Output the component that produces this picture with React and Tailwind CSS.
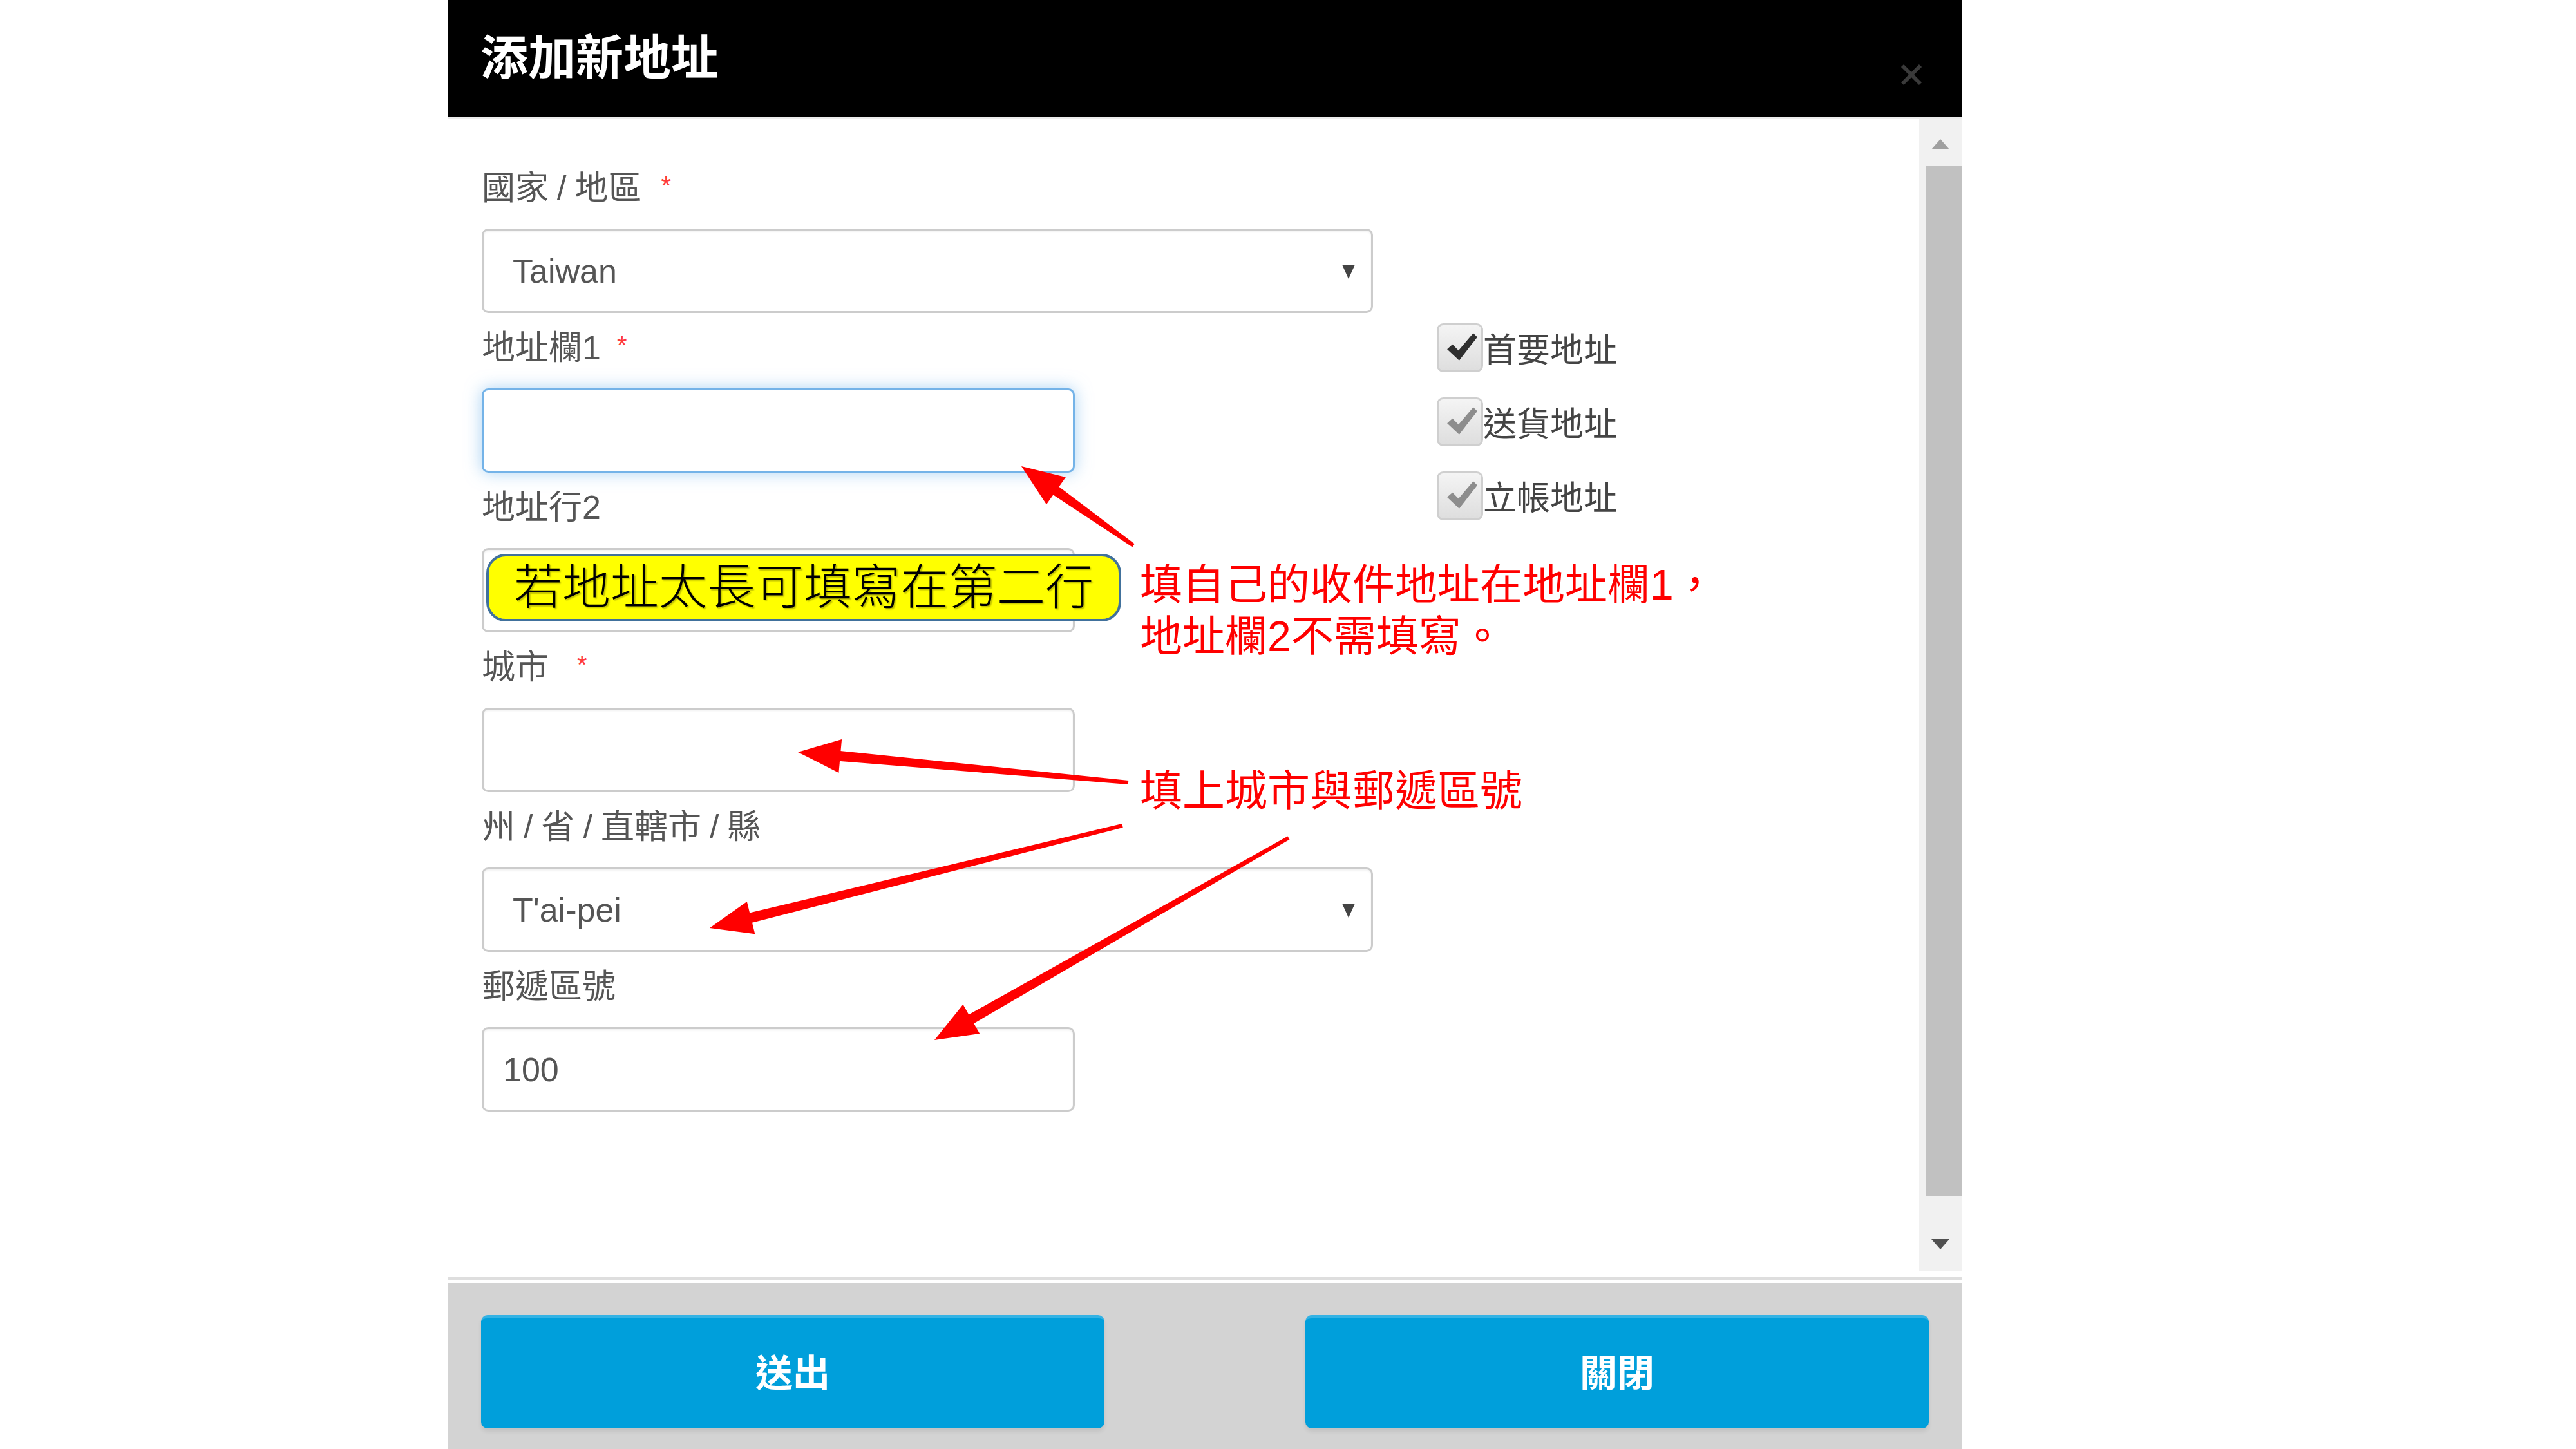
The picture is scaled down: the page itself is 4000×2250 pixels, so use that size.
import React from "react";

function arrowPoints(x1, y1, x2, y2) {
  const dx = x2 - x1;
  const dy = y2 - y1;
  const len = Math.hypot(dx, dy);
  const ux = dx / len;
  const uy = dy / len;
  const nx = -uy;
  const ny = ux;
  const headLen = 66;
  const headW = 26;
  const bx = x2 - ux * headLen;
  const by = y2 - uy * headLen;
  const p = (x, y) => `${x.toFixed(1)},${y.toFixed(1)}`;
  return {
    shaft: [
      p(x1 + nx * 3, y1 + ny * 3),
      p(bx + ux * 8 + nx * 8, by + uy * 8 + ny * 8),
      p(bx + ux * 8 - nx * 8, by + uy * 8 - ny * 8),
      p(x1 - nx * 3, y1 - ny * 3),
    ].join(" "),
    head: [p(x2, y2), p(bx + nx * headW, by + ny * headW), p(bx - nx * headW, by - ny * headW)].join(" "),
  };
}

const arrows = [
  [1760, 847, 1586, 724],
  [1752, 1215, 1239, 1168],
  [1743, 1282, 1102, 1441],
  [2001, 1301, 1451, 1615],
];

// slashes in the labels sit with some air around them
function LabelText({ text }) {
  const parts = text.split("/");
  return (
    <span>
      {parts.map((part, i) => (
        <React.Fragment key={i}>
          {i > 0 && <span className="mx-[13px]">/</span>}
          {part}
        </React.Fragment>
      ))}
    </span>
  );
}

function Label({ text, required, starGap = "ml-[30px]" }) {
  return (
    <div className="h-[117px] pt-[28px] flex items-start text-[52px] leading-none text-[#555]">
      <LabelText text={text} />
      {required && <span className={`${starGap} text-[40px] text-[#ff3b3b] mt-[2px]`}>*</span>}
    </div>
  );
}

function Caret() {
  return (
    <svg className="w-[22px] h-[26px]" viewBox="0 0 22 26">
      <path d="M1 3 H21 L11 25 Z" fill="#444" />
    </svg>
  );
}

function Select({ value }) {
  return (
    <div className="h-[131px] w-[1384px] rounded-[10px] border-[3px] border-[#cccccc] bg-white flex items-center justify-between pl-[45px] pr-[24px] shadow-[inset_0_2px_3px_rgba(0,0,0,0.06)]">
      <span className="text-[52px] text-[#555]">{value}</span>
      <Caret />
    </div>
  );
}

function Input({ value, focused, pad = "pl-[30px]" }) {
  return (
    <div
      className={
        focused
          ? "h-[131px] w-[921px] rounded-[10px] border-[3px] border-[#74b3e8] bg-white shadow-[0_0_26px_rgba(102,175,233,0.55)]"
          : `h-[131px] w-[921px] rounded-[10px] border-[3px] border-[#cccccc] bg-white flex items-center ${pad} shadow-[inset_0_2px_3px_rgba(0,0,0,0.06)]`
      }
    >
      {value && <span className="text-[52px] text-[#555]">{value}</span>}
    </div>
  );
}

function Check({ label, dark }) {
  return (
    <div className="flex items-center h-[76px]">
      <div className="w-[72px] h-[76px] rounded-[10px] border-[3px] border-[#cfcfcf] bg-gradient-to-b from-[#f4f4f4] to-[#dedede] flex items-start justify-center pt-[8px] pl-[6px]">
        <svg className="w-[50px] h-[52px]" viewBox="0 0 24 24">
          <path d="M1 13.5 L5 10 L9.5 14.5 L20.5 1.5 L23.5 4.5 L10 22 Z" fill={dark ? "#2f2f2f" : "#8d8d8d"} />
        </svg>
      </div>
      <span className="text-[52px] leading-none text-[#444] mt-[8px]">{label}</span>
    </div>
  );
}

function Button({ text }) {
  return (
    <button className="w-[968px] h-[176px] rounded-[10px] bg-[#009fdb] border-t-[5px] border-[#33b2e4] text-white text-[58px] font-bold shadow-[0_5px_6px_rgba(0,0,0,0.08)]">
      {text}
    </button>
  );
}

export default function App() {
  return (
    <div className="relative w-[4000px] h-[2250px] bg-white overflow-hidden font-['Liberation_Sans','Noto_Sans_CJK_TC',sans-serif]">
      {/* Modal */}
      <div className="ml-[696px] w-[2350px] h-full flex flex-col">
        <div className="h-[181px] bg-black flex items-center justify-between pl-[50px] pr-[60px]">
          <h1 className="text-[74px] font-bold text-white leading-none">添加新地址</h1>
          <svg className="w-[36px] h-[36px] mt-[50px]" viewBox="0 0 36 36">
            <path d="M4 4 L32 32 M32 4 L4 32" stroke="#3a3a3a" strokeWidth="6" />
          </svg>
        </div>
        <div className="h-[4px] bg-[#ececec]" />

        {/* Body */}
        <div className="h-[1798px] flex">
          <div className="flex-1 pl-[52px] pt-[53px] flex">
            <div className="w-[1384px] flex flex-col">
              <Label text="國家/地區" required />
              <Select value="Taiwan" />
              <Label text="地址欄1" required starGap="ml-[25px]" />
              <Input focused />
              <Label text="地址行2" />
              <Input />
              <Label text="城市" required starGap="ml-[44px]" />
              <Input />
              <Label text="州/省/直轄市/縣" />
              <Select value="T'ai-pei" />
              <Label text="郵遞區號" />
              <Input value="100" />
            </div>
            <div className="ml-[99px] pt-[264px] flex flex-col gap-[39px]">
              <Check label="首要地址" dark />
              <Check label="送貨地址" />
              <Check label="立帳地址" />
            </div>
          </div>
          {/* Scrollbar */}
          <div className="w-[66px] h-[1788px] bg-[#f1f1f1] flex flex-col items-center">
            <div className="h-[72px] pt-[30px]">
              <svg className="w-[30px] h-[18px]" viewBox="0 0 30 18">
                <path d="M15 1 L29 17 H1 Z" fill="#a0a0a0" />
              </svg>
            </div>
            <div className="w-[55px] h-[1600px] bg-[#c1c1c1] ml-[10px]" />
            <div className="pt-[66px]">
              <svg className="w-[30px] h-[18px]" viewBox="0 0 30 18">
                <path d="M1 1 H29 L15 17 Z" fill="#505050" />
              </svg>
            </div>
          </div>
        </div>

        {/* Footer */}
        <div className="h-[5px] bg-[#dedede]" />
        <div className="h-[4px] bg-white" />
        <div className="flex-1 bg-[#d3d3d3] px-[51px] pt-[50px] flex justify-between items-start">
          <Button text="送出" />
          <Button text="關閉" />
        </div>
      </div>

      {/* Annotations */}
      <div className="absolute left-[755px] top-[860px] w-[986px] h-[105px] rounded-[30px] border-[4px] border-[#41719c] bg-[#ffff00] flex items-center justify-center">
        <span className="text-[75px] leading-none text-black font-light [text-shadow:2px_2px_2px_rgba(0,0,0,0.25)]">若地址太長可填寫在第二行</span>
      </div>
      <div className="absolute left-[1770px] top-[868px] text-[66px] leading-[80px] text-[#ff0000]">
        <p>填自己的收件地址在地址欄1，</p>
        <p>地址欄2不需填寫。</p>
      </div>
      <div className="absolute left-[1770px] top-[1188px] text-[66px] leading-[80px] text-[#ff0000]">
        填上城市與郵遞區號
      </div>
      <svg className="absolute left-0 top-0 w-[4000px] h-[2250px] pointer-events-none" viewBox="0 0 4000 2250">
        {arrows.map(([x1, y1, x2, y2], i) => {
          const a = arrowPoints(x1, y1, x2, y2);
          return (
            <g key={i} fill="#ff0000">
              <polygon points={a.shaft} />
              <polygon points={a.head} />
            </g>
          );
        })}
      </svg>
    </div>
  );
}
